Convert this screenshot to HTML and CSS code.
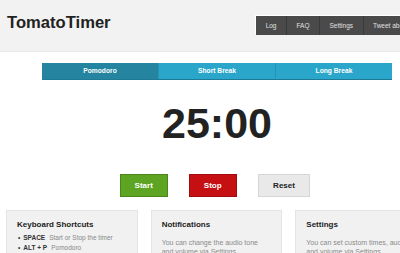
FILE: index.html
```html
<!DOCTYPE html>
<html>
<head>
<meta charset="utf-8">
<link rel="stylesheet" href="styles.css">
</head>
<body>
<div class="page">
  <header class="header">
    <div class="logo">TomatoTimer</div>
    <nav class="nav">
      <a class="nav-item">Log</a>
      <a class="nav-item">FAQ</a>
      <a class="nav-item">Settings</a>
      <a class="nav-item">Tweet about it</a>
    </nav>
  </header>
  <main class="main">
    <div class="tabs">
      <div class="tab tab-active">Pomodoro</div>
      <div class="tab">Short Break</div>
      <div class="tab">Long Break</div>
    </div>
    <div class="timer">25:00</div>
    <div class="buttons">
      <button class="btn btn-start">Start</button>
      <button class="btn btn-stop">Stop</button>
      <button class="btn btn-reset">Reset</button>
    </div>
    <div class="panels">
      <section class="panel">
        <h3 class="panel-title">Keyboard Shortcuts</h3>
        <ul class="keys">
          <li class="key-row"><span class="dot">•</span><b class="key">SPACE</b><span class="desc">Start or Stop the timer</span></li>
          <li class="key-row"><span class="dot">•</span><b class="key">ALT + P</b><span class="desc">Pomodoro</span></li>
        </ul>
      </section>
      <section class="panel">
        <h3 class="panel-title">Notifications</h3>
        <p class="panel-text">You can change the audio tone and volume via Settings</p>
      </section>
      <section class="panel">
        <h3 class="panel-title">Settings</h3>
        <p class="panel-text">You can set custom times, audio and volume via Settings.</p>
      </section>
    </div>
  </main>
</div>
</body>
</html>
```

FILE: styles.css
```css
html, body {
  margin: 0;
  padding: 0;
  overflow: hidden;
  background: #ffffff;
}
body {
  font-family: "Liberation Sans", Arial, sans-serif;
  color: #222;
}
.page {
  width: 434px;
}
.header {
  height: 52px;
  background: #f2f2f2;
  border-bottom: 1px solid #e8e8e8;
  box-sizing: border-box;
  display: flex;
  justify-content: space-between;
  align-items: flex-start;
  padding: 0 11px 0 7px;
}
.logo {
  margin-top: 13px;
  font-size: 16.6px;
  line-height: 20px;
  font-weight: bold;
  color: #222;
}
.nav {
  margin-top: 16px;
  display: flex;
  height: 19px;
  background: #4a4a4a;
  box-shadow: -1px -1px 0 #ffffff;
}
.nav-item {
  display: block;
  padding: 0 9.5px;
  border-left: 1px solid #3a3a3a;
  font-size: 6.5px;
  line-height: 19px;
  color: #e0e0e0;
  white-space: nowrap;
}
.nav-item:first-child {
  border-left: none;
  padding-left: 10px;
}
.main {
  padding-top: 11px;
}
.tabs {
  width: 350px;
  margin: 0 auto;
  display: flex;
  height: 16px;
  border-bottom: 1px solid #1e7a95;
}
.tab {
  flex: 1;
  background: #2ba6cb;
  border-left: 1px solid #2394b6;
  color: #fff;
  font-size: 6.7px;
  font-weight: bold;
  line-height: 16px;
  text-align: center;
}
.tab:first-child {
  border-left: none;
}
.tab-active {
  background: #25849f;
}
.timer {
  margin-top: 22px;
  text-align: center;
  font-size: 43px;
  line-height: 43px;
  font-weight: bold;
  color: #222;
}
.buttons {
  margin-top: 29px;
  display: flex;
  justify-content: center;
  gap: 21px;
  padding-right: 4px;
}
.btn {
  height: 23px;
  padding: 0 14px;
  font-family: "Liberation Sans", Arial, sans-serif;
  font-size: 8px;
  font-weight: bold;
  border: 1px solid;
  border-radius: 0;
  box-sizing: border-box;
  color: #fff;
}
.btn-start {
  background: #5da423;
  border-color: #4b861c;
}
.btn-stop {
  background: #c60f13;
  border-color: #a00c0f;
}
.btn-reset {
  background: #e9e9e9;
  border-color: #d6d6d6;
  color: #222;
  padding: 0 14.5px;
}
.panels {
  margin: 13px 0 0 6px;
  width: 421px;
  display: grid;
  grid-template-columns: repeat(3, 1fr);
  gap: 13px;
}
.panel {
  background: #f1f1f1;
  border: 1px solid #e4e4e4;
  padding: 8px 10px 10px;
  min-height: 60px;
}
.panel-title {
  margin: 0;
  font-size: 8px;
  line-height: 12px;
  font-weight: bold;
  color: #222;
}
.keys {
  list-style: none;
  margin: 2px 0 0;
  padding: 0 0 0 1px;
}
.key-row {
  font-size: 6.5px;
  line-height: 10px;
  color: #888;
  white-space: nowrap;
}
.dot {
  color: #333;
  margin-right: 3px;
}
.key {
  color: #333;
  margin-right: 4px;
}
.panel-text {
  margin: 8px 0 0;
  font-size: 7px;
  line-height: 8.7px;
  color: #8a8a8a;
}
```
